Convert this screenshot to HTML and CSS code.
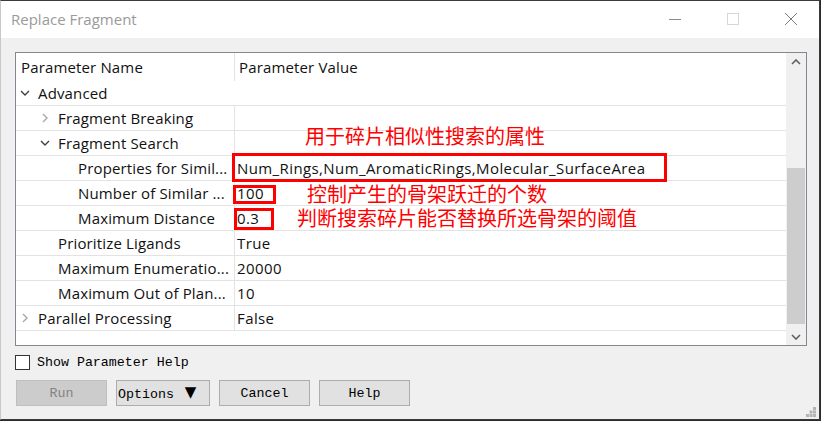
FILE: index.html
```html
<!DOCTYPE html>
<html>
<head>
    <title>Replace Fragment</title>
    <link rel="stylesheet" href="styles.css">
</head>
<body>
    <div class="window">
        <div class="titlebar">
            <span class="title">Replace Fragment</span>
            <div class="caption-buttons">
                <svg class="cap" width="14" height="14" viewBox="0 0 14 14"><path d="M1 7.5h12" stroke="#8a8a8a" stroke-width="1"/></svg>
                <svg class="cap" width="14" height="14" viewBox="0 0 14 14"><rect x="1.5" y="1.5" width="11" height="11" fill="none" stroke="#d6d6d6"/></svg>
                <svg class="cap" width="14" height="14" viewBox="0 0 14 14"><path d="M1 1l12 12M13 1L1 13" stroke="#7a7a7a" stroke-width="1"/></svg>
            </div>
        </div>

        <div class="content">
            <div class="grid-frame">
                <div class="grid-main">
                    <div class="row header">
                        <div class="cell name pad-h">Parameter Name</div>
                        <div class="cell value pad-hv">Parameter Value</div>
                    </div>
                    <div class="row group">
                        <div class="cell name"><span class="chev down"></span>Advanced</div>
                    </div>
                    <div class="row">
                        <div class="cell name lvl1"><span class="chev right"></span>Fragment Breaking</div>
                        <div class="cell value"></div>
                    </div>
                    <div class="row">
                        <div class="cell name lvl1"><span class="chev down"></span>Fragment Search</div>
                        <div class="cell value"></div>
                    </div>
                    <div class="row">
                        <div class="cell name lvl2">Properties for Simil...</div>
                        <div class="cell value">Num_Rings,Num_AromaticRings,Molecular_SurfaceArea</div>
                    </div>
                    <div class="row">
                        <div class="cell name lvl2">Number of Similar ...</div>
                        <div class="cell value">100</div>
                    </div>
                    <div class="row">
                        <div class="cell name lvl2">Maximum Distance</div>
                        <div class="cell value">0.3</div>
                    </div>
                    <div class="row">
                        <div class="cell name lvl1-leaf">Prioritize Ligands</div>
                        <div class="cell value">True</div>
                    </div>
                    <div class="row">
                        <div class="cell name lvl1-leaf">Maximum Enumeratio...</div>
                        <div class="cell value">20000</div>
                    </div>
                    <div class="row">
                        <div class="cell name lvl1-leaf">Maximum Out of Plan...</div>
                        <div class="cell value">10</div>
                    </div>
                    <div class="row">
                        <div class="cell name"><span class="chev right"></span>Parallel Processing</div>
                        <div class="cell value">False</div>
                    </div>
                </div>
                <div class="scrollbar">
                    <div class="sb-btn"><span class="chev up dark"></span></div>
                    <div class="sb-track"><div class="sb-thumb"></div></div>
                    <div class="sb-btn"><span class="chev down dark"></span></div>
                </div>
            </div>

            <label class="check-row"><span class="checkbox"></span>Show Parameter Help</label>

            <div class="buttons">
                <button class="btn disabled">Run</button>
                <button class="btn options">Options <span class="tri">&#9660;</span></button>
                <button class="btn">Cancel</button>
                <button class="btn">Help</button>
            </div>
        </div>

        <svg class="grip" width="10" height="10" viewBox="0 0 10 10" fill="#b4b4b4">
            <rect x="7" y="0" width="3" height="3"/>
            <rect x="3.5" y="3.5" width="3" height="3"/><rect x="7" y="3.5" width="3" height="3"/>
            <rect x="0" y="7" width="3" height="3"/><rect x="3.5" y="7" width="3" height="3"/><rect x="7" y="7" width="3" height="3"/>
        </svg>

        <!-- annotations drawn over the screenshot -->
        <div class="mark box1"></div>
        <div class="mark box2"></div>
        <div class="mark box3"></div>
        <div class="note note1">用于碎片相似性搜索的属性</div>
        <div class="note note2">控制产生的骨架跃迁的个数</div>
        <div class="note note3">判断搜索碎片能否替换所选骨架的阈值</div>
    </div>
</body>
</html>
```

FILE: styles.css
```css
body {
    margin: 0;
    background-color: #2b2b2b;
    font-family: "Open Sans", "Noto Sans", sans-serif;
}

.window {
    position: relative;
    width: 820px;
    height: 420px;
    box-sizing: border-box;
    background: #f0f0f0;
    border-top: 1px solid #3a3a3a;
    border-right: 1px solid #3a3a3a;
    border-bottom: 1px solid #3a3a3a;
    border-left: 1px solid #c8c8c8;
    overflow: hidden;
}

.titlebar {
    height: 37px;
    background: #ffffff;
    display: flex;
    align-items: center;
    justify-content: space-between;
}

.title {
    padding-left: 10px;
    font-family: "Open Sans", sans-serif;
    font-size: 15px;
    color: #9a9a9a;
    margin-top: -2px;
}

.caption-buttons {
    display: flex;
    gap: 44px;
    padding-right: 21px;
    margin-top: -2px;
}

.content {
    padding: 14px 12px 0 14px;
}

.grid-frame {
    display: flex;
    width: 792px;
    height: 294px;
    box-sizing: border-box;
    border: 1px solid #828790;
    background: #ffffff;
}

.grid-main {
    width: 770px;
    font-size: 15px;
    letter-spacing: 0.15px;
    color: #111111;
}

.row {
    display: flex;
    height: 25px;
    box-sizing: border-box;
    border-bottom: 1px solid #e3e3e3;
    align-items: stretch;
}

.row.header {
    height: 28px;
    border-bottom: none;
}

.cell {
    display: flex;
    align-items: center;
    white-space: nowrap;
    overflow: hidden;
}

.cell.name {
    width: 219px;
    flex: none;
    box-sizing: border-box;
    border-right: 1px solid #e3e3e3;
    padding-left: 0;
}

.row.group .cell.name {
    border-right: none;
}

.cell.value {
    padding-left: 2px;
    flex: 1;
    letter-spacing: 0.4px;
}

.pad-h {
    padding-left: 5px !important;
}

.pad-hv {
    padding-left: 4px !important;
    letter-spacing: 0.15px !important;
}

.lvl1 {
    padding-left: 20px !important;
}

.lvl1-leaf {
    padding-left: 42px !important;
}

.lvl2 {
    padding-left: 62px !important;
}

.chev {
    display: inline-block;
    width: 22px;
    height: 24px;
    flex: none;
    background-repeat: no-repeat;
    background-position: 4px center;
}

.chev.down {
    background-image: url("data:image/svg+xml;utf8,<svg xmlns='http://www.w3.org/2000/svg' width='10' height='6'><path d='M1 1l4 4 4-4' fill='none' stroke='%23404040' stroke-width='1.4'/></svg>");
}

.chev.right {
    background-image: url("data:image/svg+xml;utf8,<svg xmlns='http://www.w3.org/2000/svg' width='6' height='10'><path d='M1 1l4 4-4 4' fill='none' stroke='%23a8a8a8' stroke-width='1.4'/></svg>");
    background-position: 6px center;
}

.chev.up.dark {
    background-image: url("data:image/svg+xml;utf8,<svg xmlns='http://www.w3.org/2000/svg' width='10' height='6'><path d='M1 5l4-4 4 4' fill='none' stroke='%23606060' stroke-width='1.6'/></svg>");
}

.chev.down.dark {
    background-image: url("data:image/svg+xml;utf8,<svg xmlns='http://www.w3.org/2000/svg' width='10' height='6'><path d='M1 1l4 4 4-4' fill='none' stroke='%23606060' stroke-width='1.6'/></svg>");
}

.scrollbar {
    width: 20px;
    display: flex;
    flex-direction: column;
    background: #f0f0f0;
}

.sb-btn {
    height: 17px;
    display: flex;
    justify-content: center;
}

.sb-btn .chev {
    width: 20px;
    height: 17px;
    background-position: 5px center;
}

.sb-track {
    flex: 1;
    padding: 98px 1px 0 1px;
}

.sb-thumb {
    height: 156px;
    background: #cdcdcd;
}

.check-row {
    display: flex;
    align-items: center;
    gap: 7px;
    margin-top: 9px;
    height: 15px;
    font-family: "Liberation Mono", monospace;
    font-size: 13.3px;
    color: #000000;
}

.checkbox {
    width: 13px;
    height: 13px;
    border: 1px solid #333333;
    background: #ffffff;
}

.buttons {
    display: flex;
    gap: 9px;
    margin-top: 10px;
    padding-left: 1px;
}

.btn {
    width: 91px;
    height: 26px;
    box-sizing: border-box;
    background: #e1e1e1;
    border: 1px solid #adadad;
    font-family: "Liberation Mono", monospace;
    font-size: 13.3px;
    color: #000000;
    padding: 0;
}

.btn.disabled {
    background: #cccccc;
    border-color: #bfbfbf;
    color: #838383;
}

.btn.options {
    width: 94px;
    text-align: left;
    padding-left: 1px;
}

.tri {
    font-family: "DejaVu Sans", sans-serif;
    font-size: 15px;
    margin-left: 3px;
    position: relative;
    top: -1px;
}

.grip {
    position: absolute;
    right: 3px;
    bottom: 2px;
}

.mark {
    position: absolute;
    border: 3px solid #ff0000;
    box-sizing: border-box;
}

.box1 { left: 231px; top: 152px; width: 435px; height: 29px; }
.box2 { left: 232px; top: 184px; width: 43px; height: 19px; }
.box3 { left: 233px; top: 207px; width: 40px; height: 22px; }

.note {
    position: absolute;
    font-family: "Noto Sans CJK SC", sans-serif;
    font-size: 20px;
    line-height: 22px;
    color: #ff0000;
    white-space: nowrap;
}

.note1 { left: 304px; top: 124px; }
.note2 { left: 306px; top: 182px; }
.note3 { left: 296px; top: 206px; }
```
